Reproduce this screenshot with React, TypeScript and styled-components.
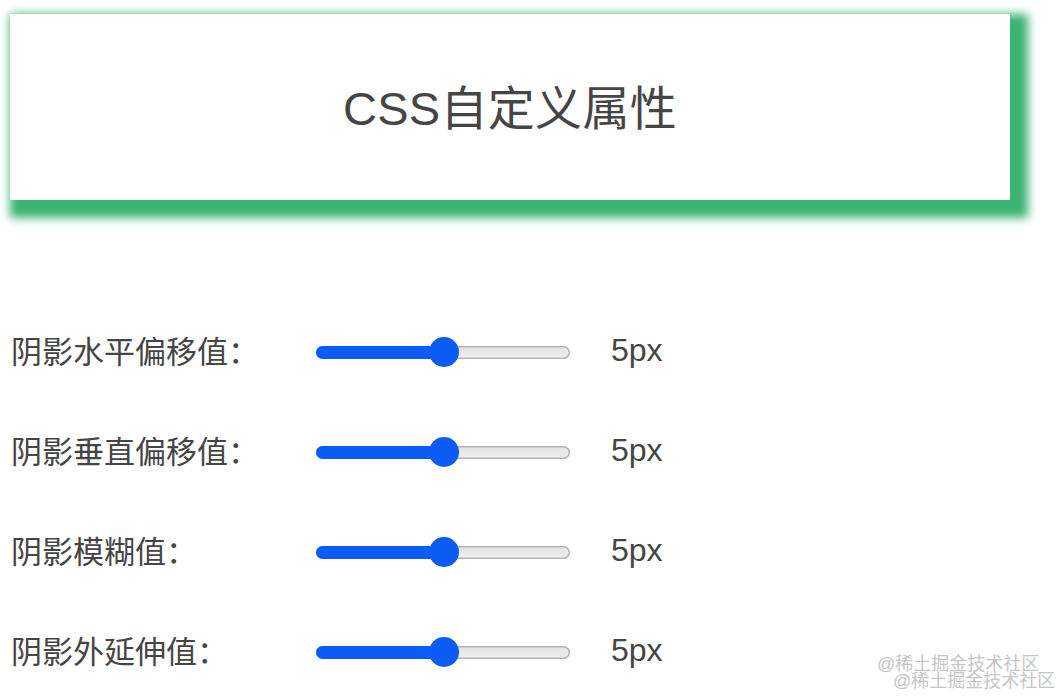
import React, { useState } from 'react'
import styled, { createGlobalStyle } from 'styled-components'

const GlobalStyle = createGlobalStyle`
  html, body {
    margin: 0;
    padding: 0;
    background: #ffffff;
  }
  body {
    font-family: "Liberation Sans", "Noto Sans CJK SC", sans-serif;
    color: #454545;
  }
`

interface SliderRow {
  label: string
  value: number
}

const rows: SliderRow[] = [
  { label: '阴影水平偏移值：', value: 5 },
  { label: '阴影垂直偏移值：', value: 5 },
  { label: '阴影模糊值：', value: 5 },
  { label: '阴影外延伸值：', value: 5 },
]

const MAX = 10

const App = () => {
  const [values, setValues] = useState(rows.map((r) => r.value))

  return (
    <Page>
      <GlobalStyle />
      <Card>
        <Title>CSS自定义属性</Title>
      </Card>
      <Controls>
        {rows.map((row, index) => {
          const percent = (values[index] / MAX) * 100
          return (
            <Row key={row.label}>
              <Label>{row.label}</Label>
              <Slider
                onClick={() => {
                  const next = [...values]
                  next[index] = (values[index] + 1) % (MAX + 1)
                  setValues(next)
                }}
              >
                <Track>
                  <Fill style={{ width: `${percent}%` }} />
                </Track>
                <Thumb style={{ left: `${percent}%` }} />
              </Slider>
              <Value>{values[index]}px</Value>
            </Row>
          )
        })}
      </Controls>
      <Watermark>
        <Mark>@稀土掘金技术社区</Mark>
        <Mark $shift>@稀土掘金技术社区</Mark>
      </Watermark>
    </Page>
  )
}

export default App

const Page = styled.div`
  position: relative;
  width: 1058px;
  height: 696px;
  overflow: hidden;
  padding-top: 14px;
  box-sizing: border-box;
`

const Card = styled.div`
  margin-left: 10px;
  width: 1000px;
  height: 186px;
  background: #ffffff;
  box-shadow: 9px 9px 9px 9px mediumseagreen;
  display: flex;
  align-items: center;
  justify-content: center;
`

const Title = styled.h1`
  margin: 0 0 6px;
  font-size: 47px;
  font-weight: 400;
  color: #454545;
  letter-spacing: 0.3px;
`

const Controls = styled.div`
  margin-top: 102px;
  display: flex;
  flex-direction: column;
`

const Row = styled.div`
  height: 100px;
  display: flex;
  align-items: center;
  padding-left: 11px;
`

const Label = styled.span`
  width: 305px;
  margin-bottom: 6px;
  font-size: 31px;
  color: #454545;
  white-space: nowrap;
`

const Slider = styled.div`
  position: relative;
  width: 254px;
  height: 30px;
  display: flex;
  align-items: center;
  cursor: pointer;
`

const Track = styled.div`
  width: 100%;
  height: 13px;
  border-radius: 7px;
  background: linear-gradient(#e2e2e2, #f0f0f0);
  box-shadow: inset 0 0 0 1.5px #b4b4b4;
  overflow: hidden;
  display: flex;
`

const Fill = styled.div`
  height: 100%;
  background: #0a5cf4;
`

const Thumb = styled.div`
  position: absolute;
  top: 0;
  width: 30px;
  height: 30px;
  margin-left: -14px;
  border-radius: 50%;
  background: #0a5cf4;
`

const Value = styled.span`
  margin-left: 41px;
  margin-bottom: 4px;
  font-size: 32px;
  color: #454545;
`

const Watermark = styled.div`
  position: absolute;
  left: 877px;
  top: 656px;
  display: flex;
  flex-direction: column;
  pointer-events: none;
`

const Mark = styled.span<{ $shift?: boolean }>`
  font-size: 18px;
  line-height: 17px;
  color: #c6c6c6;
  white-space: nowrap;
  margin-left: ${(p) => (p.$shift ? '16px' : '0')};
`
